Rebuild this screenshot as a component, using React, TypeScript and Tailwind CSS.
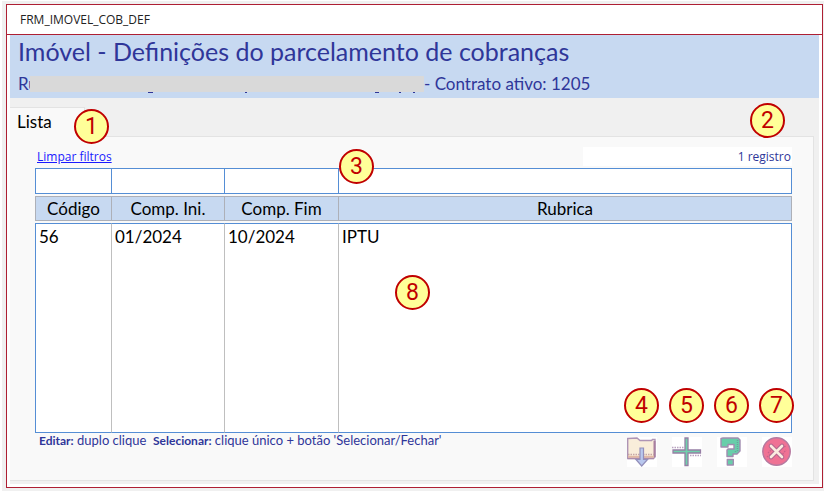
import React from 'react';
import clsx from 'clsx';

type Column = { key: 'codigo' | 'ini' | 'fim' | 'rubrica'; label: string; width: string };

const columns: Column[] = [
  { key: 'codigo', label: 'Código', width: 'w-[76px]' },
  { key: 'ini', label: 'Comp. Ini.', width: 'w-[113px]' },
  { key: 'fim', label: 'Comp. Fim', width: 'w-[114px]' },
  { key: 'rubrica', label: 'Rubrica', width: '' },
];

const rows = [{ codigo: '56', ini: '01/2024', fim: '10/2024', rubrica: 'IPTU' }];

const Badge: React.FC<{ n: number; className: string }> = ({ n, className }) => (
  <span
    className={clsx(
      'absolute z-10 flex size-[35px] items-center justify-center rounded-full border-2 border-[#c00000] bg-[#ffff99] font-[Roboto,sans-serif] text-[23px] leading-none text-[#c00000]',
      className
    )}
  >
    {n}
  </span>
);

const FolderIcon = () => (
  <svg viewBox="0 0 30 30" className="size-full" fill="none" stroke="#ae94b5" strokeWidth="1.4">
    <path d="M.7 1.500L10 1l3 2.500h11.500l1-1h2.500V20l-1.500 1.500H.7z" fill="#f9edda" />
    <path d="M27.500 4v16" stroke="#a97f9f" strokeWidth="2" />
    <path d="M1 17.500h26" stroke="#c7a6a6" strokeDasharray="1.500 1" />
    <path d="M1 19.800h26" stroke="#e2b8a4" strokeWidth="2" />
    <path d="M1 21.500h26" stroke="#ab8cab" strokeWidth="1.300" />
    <path d="M13 11h3.500v11.500h4L14.700 29 9 22.500h4z" fill="#b9c8ee" stroke="#938fbb" strokeWidth="1.200" />
  </svg>
);

const PlusIcon = () => (
  <svg viewBox="0 0 30 30" className="size-full" fill="none">
    <path d="M0 10.500h12M18 18.500h11" stroke="#b9a3c0" strokeWidth="1.300" strokeDasharray="1.500 1" />
    <path d="M13 1h3v12h12.500v3H16v12.500h-3V16H1v-3h12z" fill="#6fd0ab" stroke="#967fa5" strokeWidth="1.300" />
  </svg>
);

const HelpIcon = () => (
  <svg viewBox="0 0 30 30" className="size-full" stroke="#a08cb0" strokeWidth="1.400" strokeLinejoin="round">
    <path d="M4 1.500L6 1h15l2 2v11l-3 3h-4v2.500h-6V13l1-1h6V7.500h-6v2.500H4z" fill="#68ceaa" />
    <path d="M10.300 22.500h6v5.500h-6z" fill="#68ceaa" />
    <path d="M20.500 3v12M18.500 14v2" fill="none" stroke="#6f9e9c" strokeDasharray="1 1" />
  </svg>
);

const CloseIcon = () => (
  <svg viewBox="0 0 30 30" className="size-full" fill="none">
    <circle cx="14.500" cy="14.500" r="13.700" fill="#ef7294" stroke="#b57aa0" strokeWidth="1.500" />
    <path d="M6 16l5-5M19 19l5-6M5 20l4-3M20 11l4-2" stroke="#c7638c" strokeWidth="1.300" strokeDasharray="1.500 1" />
    <path d="M9 9l11 11M20 9L9 20" stroke="#b0688f" strokeWidth="4.600" strokeLinecap="round" />
    <path d="M9 9l11 11M20 9L9 20" stroke="#fbecdf" strokeWidth="2.600" strokeLinecap="round" />
  </svg>
);

const actions = [
  { n: 4, label: 'Selecionar/Fechar', Icon: FolderIcon },
  { n: 5, label: 'Novo', Icon: PlusIcon },
  { n: 6, label: 'Ajuda', Icon: HelpIcon },
  { n: 7, label: 'Fechar', Icon: CloseIcon },
];

const App: React.FC = () => {
  return (
    <div className="bg-white pt-px pr-[3px] pl-[2px] font-[Lato,sans-serif]">
      <div className="bg-[#f0f0f0] pt-[3px] pr-px pb-[3px] pl-1">
        <div className="border border-[#ae1f33] bg-white">
          {/* Title bar */}
          <div className="flex h-[30px] items-center border-b border-[#ae1f33] pl-[13px] font-['Open_Sans',sans-serif] text-xs text-[#222]">
            FRM_IMOVEL_COB_DEF
          </div>

          <div className="px-[3px] pb-[3px]">
            {/* Header */}
            <header className="h-[63px] bg-[#c7d9f1] pl-2 text-[#2f3699]">
              <h1 className="h-8 text-[25px] leading-8 whitespace-nowrap">
                Imóvel - Definições do parcelamento de cobranças
              </h1>
              <p className="flex h-[34px] items-center text-[17px] whitespace-nowrap">
                <span className="w-3 shrink-0">Ru</span>
                <span className="relative h-4 w-[394px] shrink-0 bg-[#d9d9d9]">
                  <svg viewBox="0 0 394 1" className="absolute top-full left-0 h-px w-full" fill="#2f3699">
                    <path d="M118 0h5v1h-5zM215 0h2v1h-2zM345 0h4v1h-4zM369 0h2v1h-2zM383 0h2v1h-2z" />
                  </svg>
                </span>
                <span>- Contrato ativo: 1205</span>
              </p>
            </header>

            <div className="bg-[#f0f0f0] pt-[9px] pr-[5px] pb-[3px]">
              {/* Tabs */}
              <div role="tablist" className="relative flex h-[29px]">
                <button
                  role="tab"
                  aria-selected="true"
                  className="-mb-px h-[30px] w-[75px] border-t border-r border-[#e3e3e3] bg-[#f9f9f9] pb-[2px] pl-[7px] text-left text-[17px] leading-none text-black"
                >
                  Lista
                </button>
                <Badge n={1} className="top-[2px] left-16" />
                <Badge n={2} className="-top-1 right-[29px]" />
              </div>

              <main className="border-t border-r border-b border-[#e3e3e3] bg-[#f9f9f9] pt-[10px] pr-[21px] pb-[13px] pl-[25px]">
                <div className="flex h-[19px] items-center justify-between font-['Open_Sans',sans-serif] text-xs leading-4">
                  <a href="#limpar" className="pl-[2px] text-[#1a1aff] underline">
                    Limpar filtros
                  </a>
                  <span className="flex h-full w-[209px] items-center justify-end bg-white pr-px text-[#2f3699]">
                    1 registro
                  </span>
                </div>

                <div className="relative">
                  <table className="w-full table-fixed border-separate border-spacing-x-0 border-spacing-y-[2px] text-[17px] leading-5 text-black">
                    <thead>
                      <tr>
                        {columns.map((c) => (
                          <td
                            key={c.key}
                            className={clsx('h-[26px] border-y border-l border-[#558ed5] bg-white p-0 last:border-r', c.width)}
                          >
                            <input aria-label={`Filtrar ${c.label}`} className="block h-6 w-full px-1 outline-none" />
                          </td>
                        ))}
                      </tr>
                      <tr>
                        {columns.map((c) => (
                          <th
                            key={c.key}
                            className="h-[25px] border-y border-l border-[#adb0b8] bg-[#c7d9f1] p-0 font-normal last:border-r"
                          >
                            {c.label}
                          </th>
                        ))}
                      </tr>
                    </thead>
                    <tbody>
                      {rows.map((r) => (
                        <tr key={r.codigo}>
                          {columns.map((c) => (
                            <td
                              key={c.key}
                              className="h-[210px] border-y border-l border-y-[#558ed5] border-l-[#bfbfbf] bg-white pt-[3px] pl-[3px] align-top first:border-l-[#558ed5] last:border-r last:border-r-[#558ed5]"
                            >
                              {r[c.key]}
                            </td>
                          ))}
                        </tr>
                      ))}
                    </tbody>
                  </table>
                  <Badge n={3} className="-top-[17px] left-[304px]" />
                  <Badge n={8} className="top-[109px] left-[360px]" />
                </div>

                {/* Footer */}
                <div className="flex items-start justify-between">
                  <p className="pl-1 text-[13px] leading-[11px] text-[#2f3699]">
                    <b className="text-xs leading-[11px]">Editar:</b> duplo clique &nbsp;
                    <b className="text-xs leading-[11px]">Selecionar:</b> clique único + botão 'Selecionar/Fechar'
                  </p>
                  <div className="flex gap-[15px] pt-[2px]">
                    {actions.map(({ n, label, Icon }) => (
                      <div key={n} className="relative">
                        <button aria-label={label} className="block size-[30px] bg-white">
                          <Icon />
                        </button>
                        <Badge n={n} className="-top-[49px] -left-[3px]" />
                      </div>
                    ))}
                  </div>
                </div>
              </main>
            </div>
          </div>
        </div>
      </div>
    </div>
  );
};

export default App;
